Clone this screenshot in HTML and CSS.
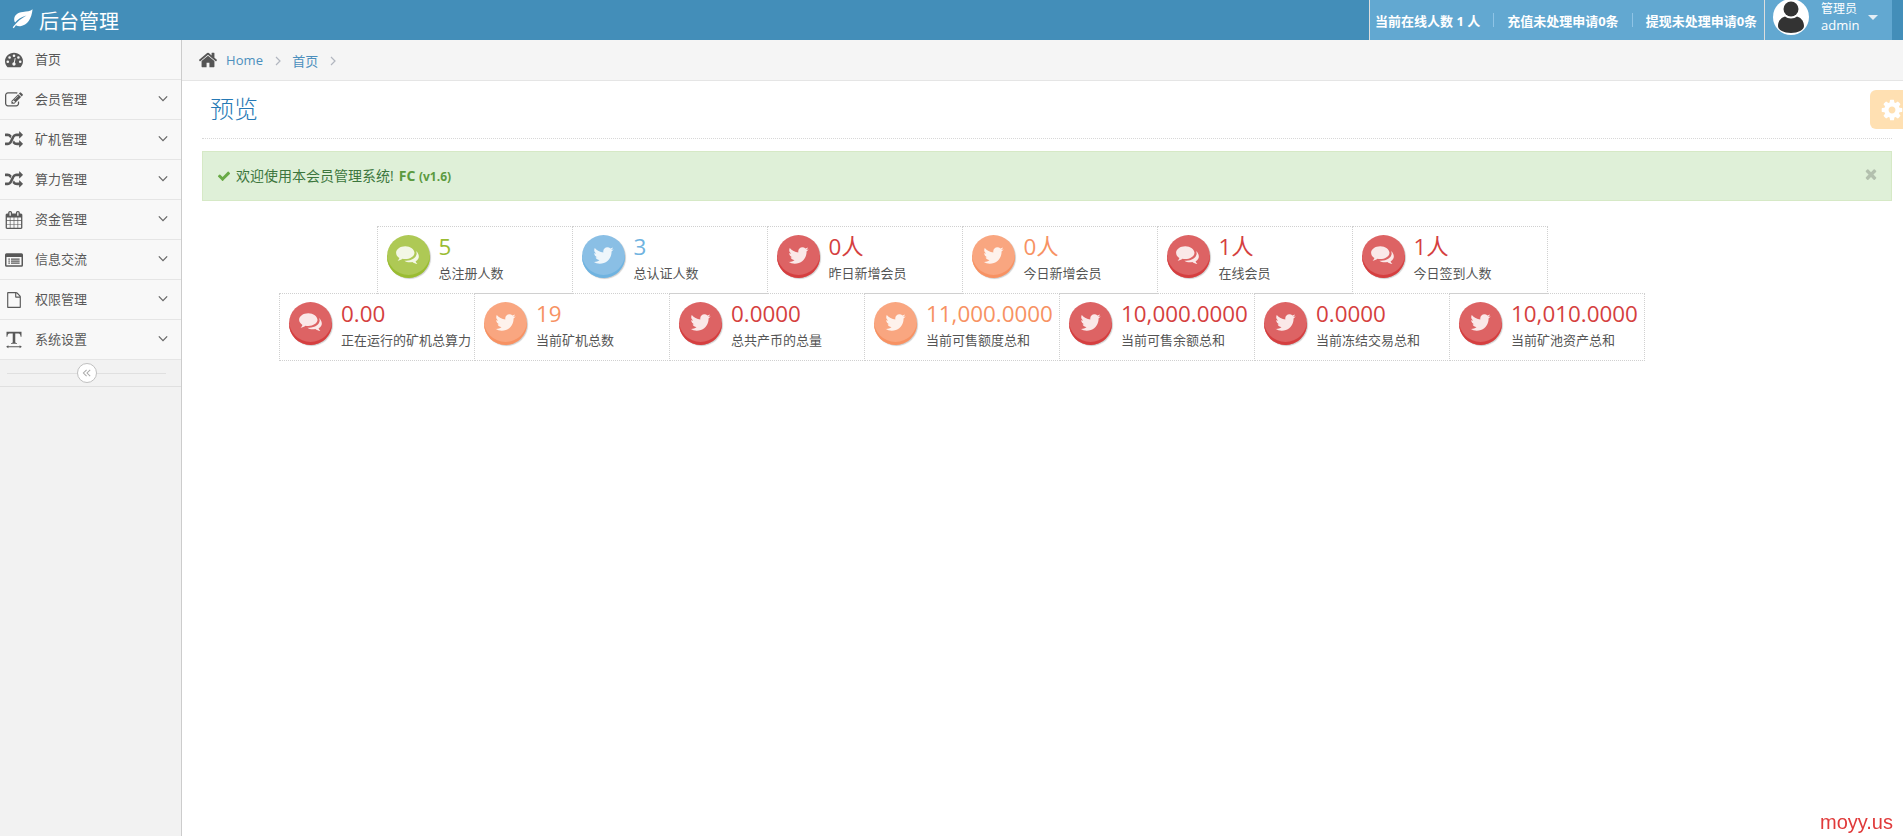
FILE: index.html
```html
<!DOCTYPE html>
<html lang="zh">
<head>
<meta charset="utf-8">
<title>后台管理</title>
<link rel="stylesheet" href="styles.css">
</head>
<body>
<svg class="sprite" xmlns="http://www.w3.org/2000/svg">
  <symbol id="i-twitter" viewBox="0 0 1792 1792"><path d="M1684 408q-67 98-162 167 1 14 1 42 0 130-38 259.500t-115.500 248.500-184.500 210.500-258 146-323 54.500q-271 0-496-145 35 4 78 4 225 0 401-138-105-2-188-64.500t-114-159.500q33 5 61 5 43 0 85-11-112-23-185.500-111.500t-73.500-205.500v-4q68 38 146 41-66-44-105-115t-39-154q0-88 44-163 121 149 294.500 238.500t371.500 99.500q-8-38-8-74 0-134 94.500-228.500t228.500-94.500q140 0 236 102 109-21 205-78-37 115-142 178 92-10 184-50z"/></symbol>
  <symbol id="i-comments" viewBox="0 0 24 24"><path d="M9.500 3C4.800 3 1 5.700 1 9.100c0 1.900 1.200 3.600 3.100 4.700-.3.900-.9 1.800-1.700 2.500 1.600-.1 3.300-.8 4.500-1.800.8.200 1.700.3 2.600.3 4.700 0 8.500-2.700 8.500-5.700S14.200 3 9.500 3z"/><path d="M19.500 7.800c.3.500.5 1.100.5 1.700 0 3.800-4.400 6.800-9.600 6.900-.6 0-1.200 0-1.700-.1 1.300 1 3.100 1.500 5 1.500.8 0 1.600-.1 2.300-.3 1.200 1 2.900 1.700 4.700 1.800-.8-.7-1.400-1.600-1.700-2.500 1.800-1 3-2.500 3-4.200 0-1.800-.8-3.400-2-4.800z"/></symbol>
  <symbol id="i-tacho" viewBox="1 3 22 18"><path fill-rule="evenodd" d="M12 3C5.900 3 1 7.700 1 13.500c0 2.600 1 5 2.600 6.800.3.400.7.700 1.300.7h14.200c.6 0 1-.3 1.300-.7 1.600-1.800 2.600-4.200 2.600-6.800C23 7.700 18.100 3 12 3zM12 5.200a1.600 1.600 0 1 1 0 3.200 1.600 1.600 0 0 1 0-3.200zM6.600 7.400a1.600 1.600 0 1 1 0 3.200 1.600 1.600 0 0 1 0-3.200zM4.400 12.600a1.600 1.600 0 1 1 0 3.200 1.600 1.600 0 0 1 0-3.200zM19.600 12.600a1.600 1.600 0 1 1 0 3.200 1.600 1.600 0 0 1 0-3.200zM17.400 7.400a1.600 1.600 0 1 1 0 3.200 1.600 1.600 0 0 1 0-3.200zM13 9.500l1 .3-1 5.200c.7.500 1 1.200 1 1.900 0 1.200-.9 2.100-2 2.100s-2-.9-2-2.100c0-1.100.8-2 1.800-2.100z"/></symbol>
  <symbol id="i-edit" viewBox="0 0 1792 1792"><path d="M888 1184l116-116-152-152-116 116v56h96v96h56zm440-720q-16-16-33 1l-350 350q-17 17-1 33t33-1l350-350q17-17 1-33zm80 594v190q0 119-84.500 203.500t-203.500 84.500h-832q-119 0-203.500-84.500t-84.500-203.500v-832q0-119 84.500-203.500t203.500-84.500h832q63 0 117 25 15 7 18 23 3 17-9 29l-49 49q-14 14-32 8-23-6-45-6h-832q-66 0-113 47t-47 113v832q0 66 47 113t113 47h832q66 0 113-47t47-113v-126q0-13 9-22l64-64q15-15 35-7t20 29zm-96-738l288 288-672 672h-288v-288zm444 132l-92 92-288-288 92-92q28-28 68-28t68 28l152 152q28 28 28 68t-28 68z"/></symbol>
  <symbol id="i-random" viewBox="0 0 1792 1792"><path d="M666 481q-60 92-137 273-22-45-37-72.500t-40.500-63.500-51-56.500-63-35-81.500-14.500h-224q-14 0-23-9t-9-23v-192q0-14 9-23t23-9h224q250 0 410 225zm1126 799q0 14-9 23l-320 320q-9 9-23 9-13 0-22.500-9.500t-9.500-22.500v-192q-32 0-85 .5t-81 1-73-1-71-5-64-10.500-63-18.500-58-28.500-59-40-55-53.500-56-69q59-93 136-273 22 45 37 72.500t40.500 63.500 51 56.500 63 35 81.500 14.500h256v-192q0-14 9-23t23-9q12 0 24 10l319 319q9 9 9 23zm0-896q0 14-9 23l-320 320q-9 9-23 9-13 0-22.500-9.500t-9.500-22.500v-192h-256q-48 0-87 15t-69 45-51 61.500-45 77.500q-32 62-78 171-29 66-49.500 111t-54 105-64 100-74 83-90 68.500-106.500 42-128 16.500h-224q-14 0-23-9t-9-23v-192q0-14 9-23t23-9h224q48 0 87-15t69-45 51-61.500 45-77.500q32-62 78-171 29-66 49.500-111t54-105 64-100 74-83 90-68.500 106.500-42 128-16.500h256v-192q0-14 9-23t23-9q12 0 24 10l319 319q9 9 9 23z"/></symbol>
  <symbol id="i-calendar" viewBox="0 0 1792 1792"><path d="M192 1664h288v-288h-288v288zm352 0h320v-288h-320v288zm-352-352h288v-320h-288v320zm352 0h320v-320h-320v320zm-352-384h288v-288h-288v288zm736 736h320v-288h-320v288zm-384-736h320v-288h-320v288zm768 736h288v-288h-288v288zm-384-352h320v-320h-320v320zm-352-864v-288q0-13-9.500-22.500t-22.500-9.500h-64q-13 0-22.500 9.500t-9.500 22.500v288q0 13 9.500 22.500t22.500 9.500h64q13 0 22.500-9.500t9.500-22.500zm736 864h288v-320h-288v320zm-384-384h320v-288h-320v288zm384 0h288v-288h-288v288zm32-480v-288q0-13-9.500-22.500t-22.500-9.500h-64q-13 0-22.500 9.500t-9.500 22.500v288q0 13 9.500 22.500t22.500 9.500h64q13 0 22.500-9.500t9.500-22.500zm384-64v1280q0 52-38 90t-90 38h-1408q-52 0-90-38t-38-90v-1280q0-52 38-90t90-38h128v-96q0-66 47-113t113-47h64q66 0 113 47t47 113v96h384v-96q0-66 47-113t113-47h64q66 0 113 47t47 113v96h128q52 0 90 38t38 90z"/></symbol>
  <symbol id="i-list" viewBox="0 0 24 24"><path fill-rule="evenodd" d="M2 3h20A2 2 0 0 1 24 5v14a2 2 0 0 1-2 2H2a2 2 0 0 1-2-2V5a2 2 0 0 1 2-2zM2 8v11h20V8zM4.500 10h2v1.500h-2zM8 10h11.500v1.500H8zM4.500 12.700h2v1.500h-2zM8 12.700h11.500v1.500H8zM4.500 15.400h2v1.500h-2zM8 15.400h11.500v1.500H8z"/></symbol>
  <symbol id="i-file" viewBox="0 0 1792 1792"><path d="M1596 380q28 28 48 76t20 88v1152q0 40-28 68t-68 28h-1344q-40 0-68-28t-28-68v-1600q0-40 28-68t68-28h896q40 0 88 20t76 48zm-444-244v376h376q-10-29-22-41l-313-313q-12-12-41-22zm384 1528v-1024h-416q-40 0-68-28t-28-68v-416h-768v1536h1280z"/></symbol>
  <symbol id="i-textw" viewBox="0 0 24 24"><path d="M2 1h20v6.500h-1.200c-.2-2-.8-3.900-2.800-4.100h-4.300v11.100c0 1.100.7 1.300 2.300 1.400V17H8v-1.100c1.600-.1 2.300-.3 2.300-1.400V3.400H6C4 3.600 3.400 5.500 3.200 7.500H2z"/><path d="M4.500 19 1.500 21l3 2v-1.400h15V23l3-2-3-2v1.400h-15z"/></symbol>
  <symbol id="i-leaf" viewBox="0 0 24 24"><path d="M23.500 1.500C21 4 17 4 12.500 4.500 6 5.200 2.500 8.500 2.500 13c0 1.300.3 2.500 1 3.500C6.500 13 11 10 16.500 8.500 11 11.500 6 15.500 2 20.500L.8 22 2 23l2.500-3.300c1.500.9 3.300 1.300 5 1.100C17.500 20 22.500 12 23.500 1.500z"/></symbol>
  <symbol id="i-home" viewBox="0 0 1792 1792"><path d="M1472 992v480q0 26-19 45t-45 19h-384v-384h-256v384h-384q-26 0-45-19t-19-45v-480q0-1 .5-3t.5-3l575-474 575 474q1 2 1 6zm223-69l-62 74q-8 9-21 11h-3q-13 0-21-7l-692-577-692 577q-12 8-24 7-13-2-21-11l-62-74q-8-10-7-23.500t11-21.500l719-599q32-26 76-26t76 26l244 204v-195q0-14 9-23t23-9h192q14 0 23 9t9 23v408l219 182q10 8 11 21.500t-7 23.500z"/></symbol>
  <symbol id="i-check" viewBox="0 0 1792 1792"><path d="M1671 566q0 40-28 68l-724 724-136 136q-28 28-68 28t-68-28l-136-136-362-362q-28-28-28-68t28-68l136-136q28-28 68-28t68 28l294 295 656-657q28-28 68-28t68 28l136 136q28 28 28 68z"/></symbol>
  <symbol id="i-times" viewBox="0 0 1792 1792"><path d="M1490 1322q0 40-28 68l-136 136q-28 28-68 28t-68-28l-294-294-294 294q-28 28-68 28t-68-28l-136-136q-28-28-28-68t28-68l294-294-294-294q-28-28-28-68t28-68l136-136q28-28 68-28t68 28l294 294 294-294q28-28 68-28t68 28l136 136q28 28 28 68t-28 68l-294 294 294 294q28 28 28 68z"/></symbol>
  <symbol id="i-cog" viewBox="0 0 1792 1792"><path d="M1152 896q0-106-75-181t-181-75-181 75-75 181 75 181 181 75 181-75 75-181zm512-109v222q0 12-8 23t-20 13l-185 28q-19 54-39 91 35 50 107 138 10 12 10 25t-9 23q-27 37-99 108t-94 71q-12 0-26-9l-138-108q-44 23-91 38-16 136-29 186-7 28-36 28h-222q-14 0-24.500-8.500t-11.500-21.500l-28-184q-49-16-90-37l-141 107q-10 9-25 9-14 0-25-11-126-114-165-168-7-10-7-23 0-12 8-23 15-21 51-66.500t54-70.500q-27-50-41-99l-183-27q-13-2-21-12.500t-8-23.500v-222q0-12 8-23t19-13l186-28q14-46 39-92-40-57-107-138-10-12-10-24 0-10 9-23 26-36 98.500-107.500t94.500-71.500q13 0 26 10l138 107q44-23 91-38 16-136 29-186 7-28 36-28h222q14 0 24.500 8.500t11.500 21.500l28 184q49 16 90 37l142-107q9-9 24-9 13 0 25 10 129 119 165 170 7 8 7 22 0 12-8 23-15 21-51 66.500t-54 70.500q26 50 41 98l183 28q13 2 21 12.500t8 23.500z"/></symbol>
  <symbol id="i-user" viewBox="0 0 36 36"><circle cx="18" cy="10" r="7.500"/><path d="M5 27c0-6 4-8.500 7-9.500 1.500 1.200 3.500 1.900 6 1.900s4.500-.7 6-1.900c3 1 7 3.500 7 9.500 0 4-6 7-13 7S5 31 5 27z"/></symbol>
</svg>

<header class="topbar">
  <div class="brand"><svg class="brand-icon"><use href="#i-leaf"/></svg><span>后台管理</span></div>
  <div class="topnav">
    <div class="stats-links">
      <span>当前在线人数 1 人</span><i class="sep"></i>
      <span>充值未处理申请0条</span><i class="sep"></i>
      <span>提现未处理申请0条</span>
    </div>
    <div class="user">
      <span class="avatar"><svg><use href="#i-user"/></svg></span>
      <span class="user-name"><small>管理员</small><b>admin</b></span>
      <i class="caret"></i>
    </div>
  </div>
</header>

<div class="layout">
  <nav class="sidebar">
    <ul class="menu">
      <li class="menu-item"><svg class="menu-icon"><use href="#i-tacho"/></svg><span class="menu-text">首页</span></li>
      <li class="menu-item"><svg class="menu-icon"><use href="#i-edit"/></svg><span class="menu-text">会员管理</span><svg class="arrow" viewBox="0 0 12 8"><path d="M1 1.500 6 6.500 11 1.500"/></svg></li>
      <li class="menu-item"><svg class="menu-icon"><use href="#i-random"/></svg><span class="menu-text">矿机管理</span><svg class="arrow" viewBox="0 0 12 8"><path d="M1 1.500 6 6.500 11 1.500"/></svg></li>
      <li class="menu-item"><svg class="menu-icon"><use href="#i-random"/></svg><span class="menu-text">算力管理</span><svg class="arrow" viewBox="0 0 12 8"><path d="M1 1.500 6 6.500 11 1.500"/></svg></li>
      <li class="menu-item"><svg class="menu-icon"><use href="#i-calendar"/></svg><span class="menu-text">资金管理</span><svg class="arrow" viewBox="0 0 12 8"><path d="M1 1.500 6 6.500 11 1.500"/></svg></li>
      <li class="menu-item"><svg class="menu-icon"><use href="#i-list"/></svg><span class="menu-text">信息交流</span><svg class="arrow" viewBox="0 0 12 8"><path d="M1 1.500 6 6.500 11 1.500"/></svg></li>
      <li class="menu-item"><svg class="menu-icon file"><use href="#i-file"/></svg><span class="menu-text">权限管理</span><svg class="arrow" viewBox="0 0 12 8"><path d="M1 1.500 6 6.500 11 1.500"/></svg></li>
      <li class="menu-item"><svg class="menu-icon"><use href="#i-textw"/></svg><span class="menu-text">系统设置</span><svg class="arrow" viewBox="0 0 12 8"><path d="M1 1.500 6 6.500 11 1.500"/></svg></li>
    </ul>
    <div class="collapse"><span class="collapse-btn"><svg viewBox="0 0 12 10"><path d="M5.500 1 1.500 5 5.500 9M10 1 6 5 10 9"/></svg></span></div>
  </nav>

  <main class="main">
    <div class="breadcrumbs">
      <svg class="home"><use href="#i-home"/></svg>
      <a class="crumb">Home</a>
      <svg class="crumb-arrow" viewBox="0 0 6 10"><path d="M1 1 5 5 1 9"/></svg>
      <a class="crumb">首页</a>
      <svg class="crumb-arrow" viewBox="0 0 6 10"><path d="M1 1 5 5 1 9"/></svg>
    </div>
    <div class="page">
      <div class="settings"><svg><use href="#i-cog"/></svg></div>
      <h1 class="page-title">预览</h1>
      <div class="alert">
        <svg class="alert-check"><use href="#i-check"/></svg>
        <span class="alert-text">欢迎使用本会员管理系统!</span>
        <strong class="alert-brand">FC <small>(v1.6)</small></strong>
        <svg class="alert-close"><use href="#i-times"/></svg>
      </div>
      <div class="boxes">
        <div class="box-row">
          <div class="box green"><span class="disc"><svg class="cm"><use href="#i-comments"/></svg></span><div class="box-data"><div class="num">5</div><div class="label">总注册人数</div></div></div>
          <div class="box blue"><span class="disc"><svg><use href="#i-twitter"/></svg></span><div class="box-data"><div class="num">3</div><div class="label">总认证人数</div></div></div>
          <div class="box red"><span class="disc"><svg><use href="#i-twitter"/></svg></span><div class="box-data"><div class="num">0人</div><div class="label">昨日新增会员</div></div></div>
          <div class="box orange"><span class="disc"><svg><use href="#i-twitter"/></svg></span><div class="box-data"><div class="num">0人</div><div class="label">今日新增会员</div></div></div>
          <div class="box red"><span class="disc"><svg class="cm"><use href="#i-comments"/></svg></span><div class="box-data"><div class="num">1人</div><div class="label">在线会员</div></div></div>
          <div class="box red"><span class="disc"><svg class="cm"><use href="#i-comments"/></svg></span><div class="box-data"><div class="num">1人</div><div class="label">今日签到人数</div></div></div>
        </div>
        <div class="box-row">
          <div class="box red"><span class="disc"><svg class="cm"><use href="#i-comments"/></svg></span><div class="box-data"><div class="num">0.00</div><div class="label">正在运行的矿机总算力</div></div></div>
          <div class="box orange"><span class="disc"><svg><use href="#i-twitter"/></svg></span><div class="box-data"><div class="num">19</div><div class="label">当前矿机总数</div></div></div>
          <div class="box red"><span class="disc"><svg><use href="#i-twitter"/></svg></span><div class="box-data"><div class="num">0.0000</div><div class="label">总共产币的总量</div></div></div>
          <div class="box orange"><span class="disc"><svg><use href="#i-twitter"/></svg></span><div class="box-data"><div class="num">11,000.0000</div><div class="label">当前可售额度总和</div></div></div>
          <div class="box red"><span class="disc"><svg><use href="#i-twitter"/></svg></span><div class="box-data"><div class="num">10,000.0000</div><div class="label">当前可售余额总和</div></div></div>
          <div class="box red"><span class="disc"><svg><use href="#i-twitter"/></svg></span><div class="box-data"><div class="num">0.0000</div><div class="label">当前冻结交易总和</div></div></div>
          <div class="box red"><span class="disc"><svg><use href="#i-twitter"/></svg></span><div class="box-data"><div class="num">10,010.0000</div><div class="label">当前矿池资产总和</div></div></div>
        </div>
      </div>
    </div>
  </main>
</div>
<div class="watermark">moyy.us</div>
</body>
</html>
```

FILE: styles.css
```css
* { box-sizing: border-box; }
html, body { height: 100%; }
body {
  margin: 0;
  overflow: hidden;
  background: #fff;
  color: #393939;
  font-family: "Open Sans", "Noto Sans CJK SC", sans-serif;
  font-size: 13px;
}
.sprite { display: none; }

.topbar {
  height: 40px;
  background: #438eb9;
  color: #fff;
  display: flex;
  justify-content: space-between;
}
.brand {
  display: flex;
  align-items: center;
  padding-left: 12px;
  font-size: 20px;
}
.brand-icon { width: 21px; height: 21px; fill: #fff; margin: -3px 6px 0 0; }
.topnav {
  display: flex;
  height: 40px;
  margin-right: 11px;
  background: #62a8d1;
}
.stats-links {
  display: flex;
  align-items: center;
  gap: 13px;
  width: 395px;
  padding-left: 5px;
  border-left: 1px solid #ddd;
  font-weight: 700;
  font-size: 13px;
  white-space: nowrap;
}
.sep { width: 1px; height: 14px; background: #8fc4e6; }
.user {
  display: flex;
  align-items: center;
  width: 128px;
  padding-left: 8px;
  border-left: 1px solid #ddd;
}
.avatar {
  flex: none;
  width: 36px;
  height: 36px;
  margin-top: -6px;
  border-radius: 50%;
  background: #fff;
  overflow: hidden;
}
.avatar svg { display: block; width: 36px; height: 36px; fill: #333; }
.user-name { display: flex; flex-direction: column; margin: -6px 0 0 12px; line-height: 16px; }
.user-name small { font-size: 12px; }
.user-name b { font-weight: 400; font-size: 13px; }
.caret {
  margin: -6px 0 0 9px;
  border-style: solid;
  border-color: #e3eef6 transparent transparent;
  border-width: 5px 5px 0;
}

.layout { display: flex; height: 796px; }
.sidebar {
  flex: 0 0 182px;
  background: #f2f2f2;
  border-right: 1px solid #ccc;
}
.menu { list-style: none; margin: 0; padding: 0; }
.menu-item {
  display: flex;
  align-items: center;
  height: 40px;
  padding: 0 13px 0 5px;
  background: #f8f8f8;
  border-bottom: 1px solid #e5e5e5;
  color: #585858;
}
.menu-icon { width: 18px; height: 18px; fill: #585858; flex: none; }
.menu-icon.file { height: 16px; }
.menu-text { margin: 0 0 2px 12px; flex: 1; }
.arrow { width: 10px; height: 7px; margin-bottom: 2px; fill: none; stroke: #666; stroke-width: 1.500; }
.collapse {
  height: 27px;
  padding-right: 7px;
  border-bottom: 1px solid #e0e0e0;
  background: linear-gradient(#e0e0e0, #e0e0e0) 7px 13px / 159px 1px no-repeat;
  display: flex;
  align-items: center;
  justify-content: center;
}
.collapse-btn {
  width: 20px;
  height: 20px;
  border-radius: 50%;
  background: #fff;
  border: 1px solid #c0c0c0;
  display: flex;
  align-items: center;
  justify-content: center;
}
.collapse-btn svg { width: 10px; height: 8px; fill: none; stroke: #aaa; stroke-width: 1.300; }

.main { flex: 1; min-width: 0; }
.breadcrumbs {
  height: 41px;
  display: flex;
  align-items: center;
  padding-left: 16px;
  background: #f5f5f5;
  border-bottom: 1px solid #e5e5e5;
}
.home { width: 20px; height: 20px; fill: #555; margin-right: 8px; }
.crumb { color: #4c8fbd; font-size: 13px; letter-spacing: .1px; }
.crumb-arrow { width: 6px; height: 10px; margin: 1px 11px 0 12px; fill: none; stroke: #b2b6bf; stroke-width: 1.200; }

.page { position: relative; padding: 0 11px 0 20px; }
.settings {
  position: absolute;
  top: 9px;
  right: 0;
  width: 33px;
  height: 39px;
  background: #ffe0b2;
  border-radius: 6px 0 0 6px;
  display: flex;
  align-items: center;
  padding-left: 10px;
  overflow: hidden;
}
.settings svg { flex: none; width: 24px; height: 24px; fill: #fff; }
.page-title {
  margin: 0;
  height: 58px;
  padding: 11px 0 0 8px;
  font-size: 24px;
  font-weight: 300;
  line-height: 34px;
  color: #2679b5;
  border-bottom: 1px dotted #d8d8d8;
}
.alert {
  position: relative;
  display: flex;
  align-items: center;
  height: 50px;
  margin-top: 12px;
  padding-left: 14px;
  background: #dff0d8;
  border: 1px solid #d6e9c6;
  color: #3c763d;
  font-size: 14px;
}
.alert-check { width: 14px; height: 14px; fill: #69aa46; margin-right: 5px; }
.alert-text { margin-bottom: 2px; }
.alert-brand { margin: 0 0 2px 5px; color: #5c9a3f; }
.alert-brand small { font-size: 12px; }
.alert-close { position: absolute; right: 12px; top: 14px; width: 16px; height: 16px; fill: #b3c0ae; }

.boxes {
  width: 1520px;
  padding-top: 25px;
}
.box-row { display: flex; justify-content: center; }
.box-row + .box-row { margin-top: -1px; }
.box {
  display: flex;
  flex: 0 0 196px;
  height: 68px;
  padding: 8px 0 0 9px;
  border: 1px dotted #d0d0d0;
  white-space: nowrap;
}
.box + .box { margin-left: -1px; }
.disc {
  flex: none;
  width: 43px;
  height: 43px;
  border-radius: 50%;
  display: flex;
  align-items: center;
  justify-content: center;
  box-shadow: inset 0 -3px 0 var(--dark), 1px 1px 1px rgba(0,0,0,.2);
  background: var(--soft);
}
.disc svg { width: 23px; height: 23px; fill: rgba(255,255,255,.85); margin-top: -2px; }
.disc svg.cm { width: 26px; height: 26px; }
.box-data { margin-left: 9px; }
.num {
  font-size: 22.400px;
  line-height: 24px;
  color: var(--dark);
}
.label {
  margin-top: 5px;
  font-size: 13px;
  line-height: 18px;
  color: #555;
}
.red { --dark: #d53f40; --soft: #dd6364; }
.orange { --dark: #f79263; --soft: #f9a680; }
.green { --dark: #9abc32; --soft: #aec955; }
.blue { --dark: #6fb3e0; --soft: #8abfe5; }

.watermark {
  position: fixed;
  right: 10px;
  bottom: 2px;
  color: #e03a3a;
  font-family: "Liberation Sans", sans-serif;
  font-size: 20px;
}
```
